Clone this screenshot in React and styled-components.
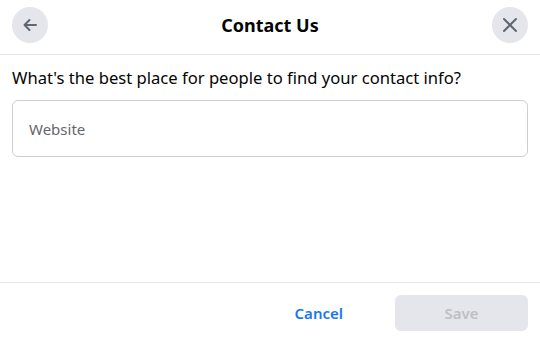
import React from 'react';
import styled, { createGlobalStyle } from 'styled-components';

const GlobalStyle = createGlobalStyle`
  html, body {
    margin: 0;
    padding: 0;
    background: #ffffff;
  }
  body {
    font-family: "Noto Sans", "Open Sans", "Liberation Sans", sans-serif;
    color: #050505;
  }
`;

const Dialog = styled.div`
  width: 540px;
  height: 340px;
  display: flex;
  flex-direction: column;
  background: #ffffff;
  box-sizing: border-box;
`;

const Header = styled.header`
  height: 55px;
  box-sizing: border-box;
  border-bottom: 1px solid #e4e6eb;
  display: flex;
  align-items: center;
  justify-content: space-between;
  padding: 0 12px 4px;
`;

const CircleButton = styled.button`
  width: 36px;
  height: 36px;
  border-radius: 50%;
  border: none;
  background: #e4e6eb;
  display: flex;
  align-items: center;
  justify-content: center;
  padding: 0;
  cursor: pointer;
  color: #606770;
`;

const Title = styled.h1`
  margin: 0;
  font-size: 18px;
  font-weight: 700;
  color: #050505;
`;

const Body = styled.main`
  flex: 1;
  padding: 12px 12px 0;
  display: flex;
  flex-direction: column;
`;

const Question = styled.p`
  margin: 0;
  font-size: 16.6px;
  line-height: 22px;
  color: #050505;
`;

const Field = styled.input`
  margin-top: 11px;
  height: 57px;
  box-sizing: border-box;
  border: 1px solid #ccd0d5;
  border-radius: 6px;
  padding: 0 16px;
  font-family: inherit;
  font-size: 15px;
  color: #050505;
  outline: none;

  &::placeholder {
    color: #65676b;
  }
`;

const Footer = styled.footer`
  height: 58px;
  box-sizing: border-box;
  border-top: 1px solid #e4e6eb;
  display: flex;
  justify-content: flex-end;
  align-items: flex-start;
  padding: 12px 12px 0;
  gap: 26px;
`;

const TextButton = styled.button`
  height: 36px;
  padding: 0 26px;
  border: none;
  background: transparent;
  font-family: inherit;
  font-size: 15px;
  font-weight: 600;
  color: #1877f2;
  cursor: pointer;
`;

const SaveButton = styled.button`
  width: 133px;
  height: 36px;
  border: none;
  border-radius: 6px;
  background: #e4e6eb;
  font-family: inherit;
  font-size: 15px;
  font-weight: 600;
  color: #bcc0c4;
`;

const BackIcon = () => (
  <svg width="20" height="20" viewBox="0 0 20 20" fill="none">
    <path d="M16 10H4.5M9.5 5L4.5 10L9.5 15" stroke="currentColor" strokeWidth="2" strokeLinecap="round" strokeLinejoin="round" />
  </svg>
);

const CloseIcon = () => (
  <svg width="20" height="20" viewBox="0 0 20 20" fill="none">
    <path d="M4 4L16 16M16 4L4 16" stroke="currentColor" strokeWidth="2" strokeLinecap="round" />
  </svg>
);

const App = () => (
  <>
    <GlobalStyle />
    <Dialog>
      <Header>
        <CircleButton aria-label="Back">
          <BackIcon />
        </CircleButton>
        <Title>Contact Us</Title>
        <CircleButton aria-label="Close">
          <CloseIcon />
        </CircleButton>
      </Header>
      <Body>
        <Question>What's the best place for people to find your contact info?</Question>
        <Field placeholder="Website" />
      </Body>
      <Footer>
        <TextButton>Cancel</TextButton>
        <SaveButton disabled>Save</SaveButton>
      </Footer>
    </Dialog>
  </>
);

export default App;
